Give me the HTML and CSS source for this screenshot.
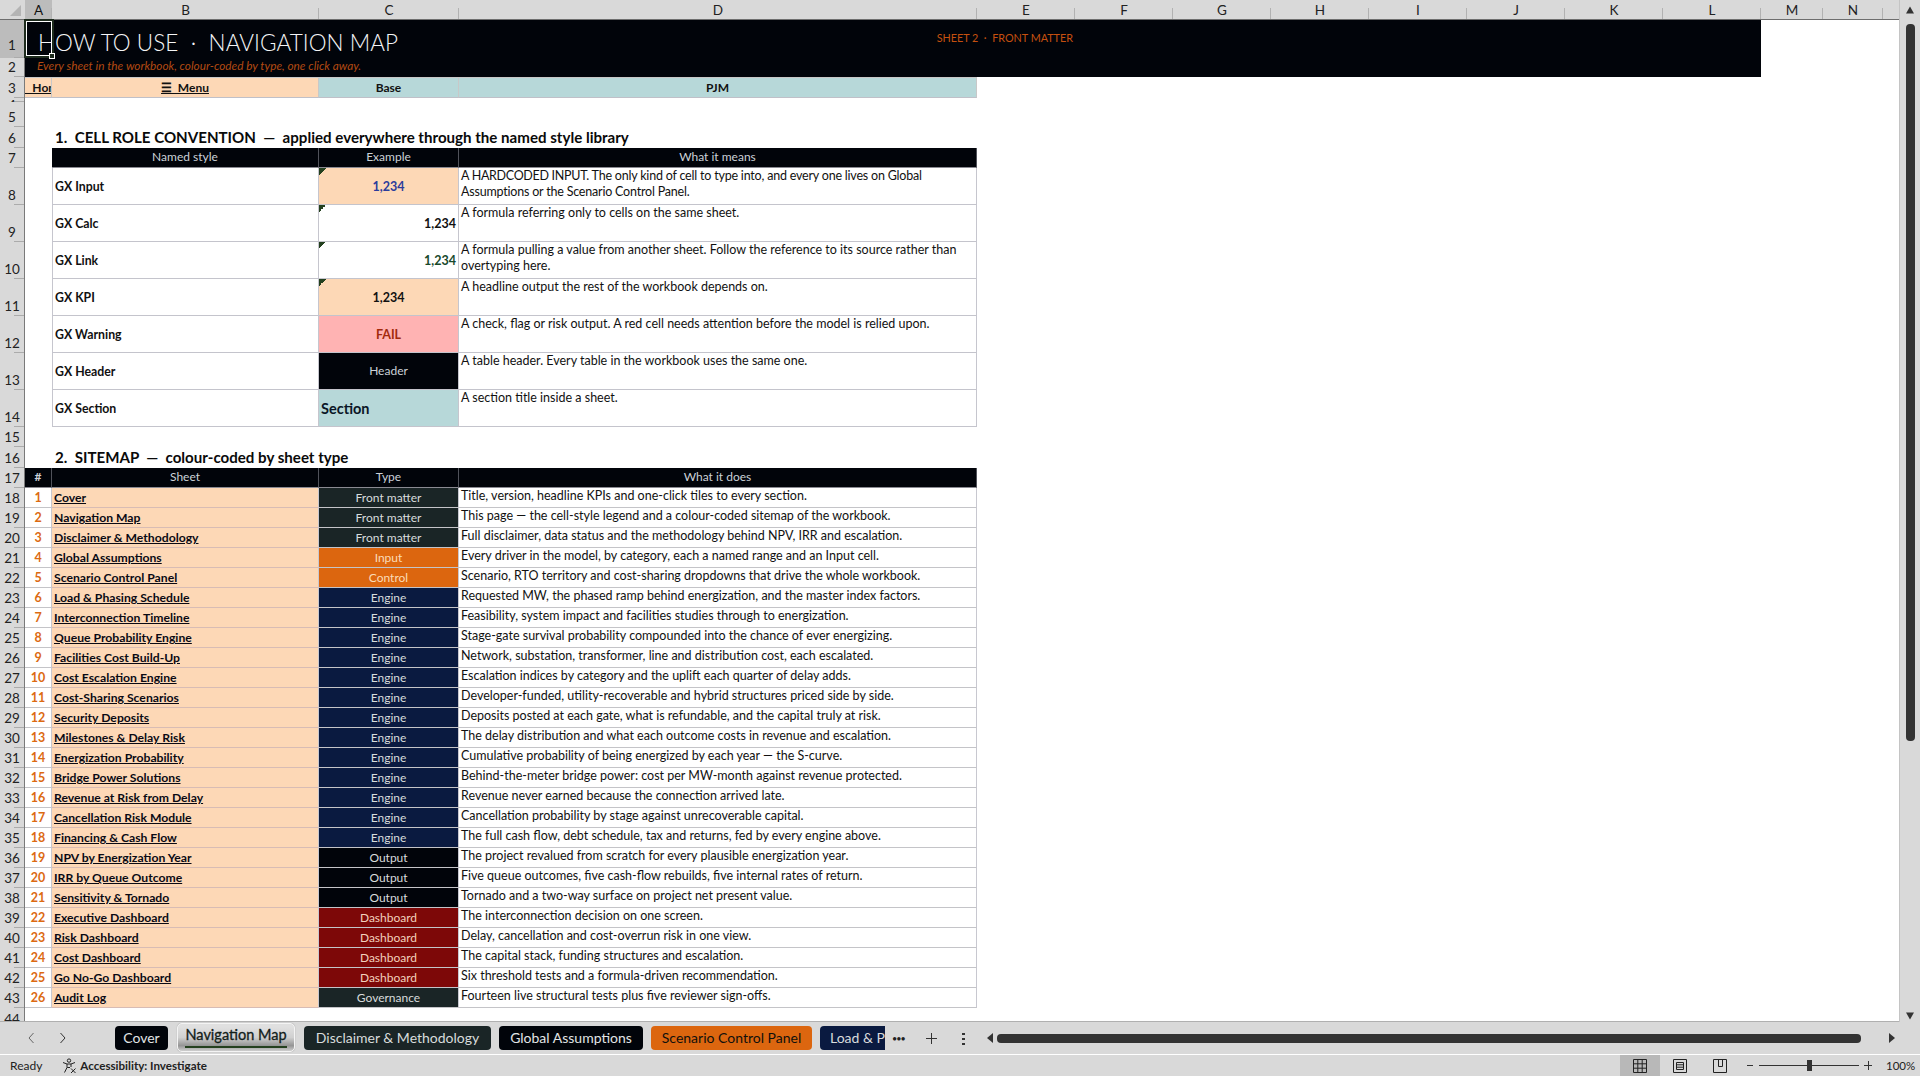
FILE: index.html
```html
<!DOCTYPE html>
<html lang="en">
<head>
  <meta charset="UTF-8" />
  <title>Navigation Map</title>
  <link rel="stylesheet" href="styles.css">
</head>
<body>
  <div id="main">
    <div id="sheet">
      <table id="cells">
        <colgroup>
          <col class="c-rh"><col class="c-a"><col class="c-b"><col class="c-c"><col class="c-d">
          <col class="c-x"><col class="c-x"><col class="c-x"><col class="c-x"><col class="c-x"><col class="c-x"><col class="c-x"><col class="c-x">
          <col class="c-m"><col class="c-n"><col class="c-end">
        </colgroup>
        <tr class="h-19 col-heads">
          <th class="corner"><svg viewBox="0 0 25 19" width="25" height="19"><path d="M21 5v11H10z" fill="#b4b4b4"/></svg></th>
          <th class="active">A</th><th>B</th><th>C</th><th>D</th><th>E</th><th>F</th><th>G</th><th>H</th><th>I</th><th>J</th><th>K</th><th>L</th><th>M</th><th>N</th><th class="blank"></th>
        </tr>
        <tr class="h-38">
          <th class="rh active first-row">1</th>
          <td colspan="4" class="band title">HOW TO USE &nbsp;·&nbsp; NAVIGATION MAP</td>
          <td class="band tag"><span>SHEET 2 &nbsp;·&nbsp; FRONT MATTER</span></td>
          <td colspan="7" class="band"></td>
        </tr>
        <tr class="h-19">
          <th class="rh">2</th>
          <td colspan="12" class="band subtitle">Every sheet in the workbook, colour-coded by type, one click away.</td>
        </tr>
        <tr class="h-21 nav-row">
          <th class="rh">3</th>
          <td class="nav peach home">&nbsp;&nbsp;&thinsp;Home</td>
          <td class="nav peach"><u>☰&nbsp; Menu</u></td>
          <td class="nav teal">Base</td>
          <td class="nav teal">PJM</td>
        </tr>
        <tr class="h-4"><th class="rh"><div class="clip">4</div></th></tr>
        <tr class="h-25"><th class="rh">5</th></tr>
        <tr class="h-21">
          <th class="rh">6</th><td></td>
          <td class="section-head">1.&nbsp; CELL ROLE CONVENTION &nbsp;—&nbsp; applied everywhere through the named style library</td>
        </tr>
        <tr class="h-20 head-row">
          <th class="rh">7</th><td></td><td>Named style</td><td>Example</td><td>What it means</td>
        </tr>
        <tr class="h-37 style-row">
          <th class="rh">8</th><td></td><td class="name">GX Input</td>
          <td class="ex flag peach ex-input">1,234</td>
          <td class="desc tight"><span class="caps">A HARDCODED INPUT.</span> The only kind of cell to type into, and every one lives on Global Assumptions or the Scenario Control Panel.</td>
        </tr>
        <tr class="h-37 style-row">
          <th class="rh">9</th><td></td><td class="name">GX Calc</td>
          <td class="ex flag ex-calc">1,234</td>
          <td class="desc">A formula referring only to cells on the same sheet.</td>
        </tr>
        <tr class="h-37 style-row">
          <th class="rh">10</th><td></td><td class="name">GX Link</td>
          <td class="ex flag ex-link">1,234</td>
          <td class="desc">A formula pulling a value from another sheet. Follow the reference to its source rather than overtyping here.</td>
        </tr>
        <tr class="h-37 style-row">
          <th class="rh">11</th><td></td><td class="name">GX KPI</td>
          <td class="ex flag peach ex-kpi">1,234</td>
          <td class="desc">A headline output the rest of the workbook depends on.</td>
        </tr>
        <tr class="h-37 style-row">
          <th class="rh">12</th><td></td><td class="name">GX Warning</td>
          <td class="ex ex-warn">FAIL</td>
          <td class="desc">A check, flag or risk output. A red cell needs attention before the model is relied upon.</td>
        </tr>
        <tr class="h-37 style-row">
          <th class="rh">13</th><td></td><td class="name">GX Header</td>
          <td class="ex ex-head">Header</td>
          <td class="desc">A table header. Every table in the workbook uses the same one.</td>
        </tr>
        <tr class="h-37 style-row">
          <th class="rh">14</th><td></td><td class="name">GX Section</td>
          <td class="ex teal ex-section">Section</td>
          <td class="desc">A section title inside a sheet.</td>
        </tr>
        <tr class="h-20"><th class="rh">15</th></tr>
        <tr class="h-21">
          <th class="rh">16</th><td></td>
          <td class="section-head">2.&nbsp; SITEMAP &nbsp;—&nbsp; colour-coded by sheet type</td>
        </tr>
        <tr class="h-20 head-row">
          <th class="rh">17</th><td class="hash">#</td><td>Sheet</td><td>Type</td><td>What it does</td>
        </tr>
        <tr class="h-20 map"><th class="rh">18</th><td class="num">1</td><td class="link"><u>Cover</u></td><td class="kind front">Front matter</td><td class="what">Title, version, headline KPIs and one-click tiles to every section.</td></tr>
        <tr class="h-20 map"><th class="rh">19</th><td class="num">2</td><td class="link"><u>Navigation Map</u></td><td class="kind front">Front matter</td><td class="what">This page — the cell-style legend and a colour-coded sitemap of the workbook.</td></tr>
        <tr class="h-20 map"><th class="rh">20</th><td class="num">3</td><td class="link"><u>Disclaimer &amp; Methodology</u></td><td class="kind front">Front matter</td><td class="what">Full disclaimer, data status and the methodology behind NPV, IRR and escalation.</td></tr>
        <tr class="h-20 map"><th class="rh">21</th><td class="num">4</td><td class="link"><u>Global Assumptions</u></td><td class="kind input">Input</td><td class="what">Every driver in the model, by category, each a named range and an Input cell.</td></tr>
        <tr class="h-20 map"><th class="rh">22</th><td class="num">5</td><td class="link"><u>Scenario Control Panel</u></td><td class="kind input">Control</td><td class="what">Scenario, RTO territory and cost-sharing dropdowns that drive the whole workbook.</td></tr>
        <tr class="h-20 map"><th class="rh">23</th><td class="num">6</td><td class="link"><u>Load &amp; Phasing Schedule</u></td><td class="kind engine">Engine</td><td class="what">Requested MW, the phased ramp behind energization, and the master index factors.</td></tr>
        <tr class="h-20 map"><th class="rh">24</th><td class="num">7</td><td class="link"><u>Interconnection Timeline</u></td><td class="kind engine">Engine</td><td class="what">Feasibility, system impact and facilities studies through to energization.</td></tr>
        <tr class="h-20 map"><th class="rh">25</th><td class="num">8</td><td class="link"><u>Queue Probability Engine</u></td><td class="kind engine">Engine</td><td class="what">Stage-gate survival probability compounded into the chance of ever energizing.</td></tr>
        <tr class="h-20 map"><th class="rh">26</th><td class="num">9</td><td class="link"><u>Facilities Cost Build-Up</u></td><td class="kind engine">Engine</td><td class="what">Network, substation, transformer, line and distribution cost, each escalated.</td></tr>
        <tr class="h-20 map"><th class="rh">27</th><td class="num">10</td><td class="link"><u>Cost Escalation Engine</u></td><td class="kind engine">Engine</td><td class="what">Escalation indices by category and the uplift each quarter of delay adds.</td></tr>
        <tr class="h-20 map"><th class="rh">28</th><td class="num">11</td><td class="link"><u>Cost-Sharing Scenarios</u></td><td class="kind engine">Engine</td><td class="what">Developer-funded, utility-recoverable and hybrid structures priced side by side.</td></tr>
        <tr class="h-20 map"><th class="rh">29</th><td class="num">12</td><td class="link"><u>Security Deposits</u></td><td class="kind engine">Engine</td><td class="what">Deposits posted at each gate, what is refundable, and the capital truly at risk.</td></tr>
        <tr class="h-20 map"><th class="rh">30</th><td class="num">13</td><td class="link"><u>Milestones &amp; Delay Risk</u></td><td class="kind engine">Engine</td><td class="what">The delay distribution and what each outcome costs in revenue and escalation.</td></tr>
        <tr class="h-20 map"><th class="rh">31</th><td class="num">14</td><td class="link"><u>Energization Probability</u></td><td class="kind engine">Engine</td><td class="what">Cumulative probability of being energized by each year — the S-curve.</td></tr>
        <tr class="h-20 map"><th class="rh">32</th><td class="num">15</td><td class="link"><u>Bridge Power Solutions</u></td><td class="kind engine">Engine</td><td class="what">Behind-the-meter bridge power: cost per MW-month against revenue protected.</td></tr>
        <tr class="h-20 map"><th class="rh">33</th><td class="num">16</td><td class="link"><u>Revenue at Risk from Delay</u></td><td class="kind engine">Engine</td><td class="what">Revenue never earned because the connection arrived late.</td></tr>
        <tr class="h-20 map"><th class="rh">34</th><td class="num">17</td><td class="link"><u>Cancellation Risk Module</u></td><td class="kind engine">Engine</td><td class="what">Cancellation probability by stage against unrecoverable capital.</td></tr>
        <tr class="h-20 map"><th class="rh">35</th><td class="num">18</td><td class="link"><u>Financing &amp; Cash Flow</u></td><td class="kind engine">Engine</td><td class="what">The full cash flow, debt schedule, tax and returns, fed by every engine above.</td></tr>
        <tr class="h-20 map"><th class="rh">36</th><td class="num">19</td><td class="link"><u>NPV by Energization Year</u></td><td class="kind output">Output</td><td class="what">The project revalued from scratch for every plausible energization year.</td></tr>
        <tr class="h-20 map"><th class="rh">37</th><td class="num">20</td><td class="link"><u>IRR by Queue Outcome</u></td><td class="kind output">Output</td><td class="what">Five queue outcomes, five cash-flow rebuilds, five internal rates of return.</td></tr>
        <tr class="h-20 map"><th class="rh">38</th><td class="num">21</td><td class="link"><u>Sensitivity &amp; Tornado</u></td><td class="kind output">Output</td><td class="what">Tornado and a two-way surface on project net present value.</td></tr>
        <tr class="h-20 map"><th class="rh">39</th><td class="num">22</td><td class="link"><u>Executive Dashboard</u></td><td class="kind dash">Dashboard</td><td class="what">The interconnection decision on one screen.</td></tr>
        <tr class="h-20 map"><th class="rh">40</th><td class="num">23</td><td class="link"><u>Risk Dashboard</u></td><td class="kind dash">Dashboard</td><td class="what">Delay, cancellation and cost-overrun risk in one view.</td></tr>
        <tr class="h-20 map"><th class="rh">41</th><td class="num">24</td><td class="link"><u>Cost Dashboard</u></td><td class="kind dash">Dashboard</td><td class="what">The capital stack, funding structures and escalation.</td></tr>
        <tr class="h-20 map"><th class="rh">42</th><td class="num">25</td><td class="link"><u>Go No-Go Dashboard</u></td><td class="kind dash">Dashboard</td><td class="what">Six threshold tests and a formula-driven recommendation.</td></tr>
        <tr class="h-20 map"><th class="rh">43</th><td class="num">26</td><td class="link"><u>Audit Log</u></td><td class="kind front">Governance</td><td class="what">Fourteen live structural tests plus five reviewer sign-offs.</td></tr>
        <tr class="h-15"><th class="rh"><div class="clip-44">44</div></th></tr>
      </table>
      <div id="cursor"><i></i></div>
    </div>
    <div id="vscroll">
      <svg class="arrow" viewBox="0 0 10 10" width="10" height="10"><path d="M5 1.5l4 7H1z" fill="#333"/></svg>
      <div class="thumb"></div>
      <svg class="arrow bottom" viewBox="0 0 10 10" width="10" height="10"><path d="M5 8.5l4-7H1z" fill="#333"/></svg>
    </div>
  </div>

  <div id="tabbar">
    <svg class="chev first" viewBox="0 0 10 14" width="10" height="14"><path d="M7.5 2L3 7l4.5 5" fill="none" stroke="#666" stroke-width="1"/></svg>
    <svg class="chev" viewBox="0 0 10 14" width="10" height="14"><path d="M2.5 2L7 7l-4.5 5" fill="none" stroke="#333" stroke-width="1"/></svg>
    <div class="tabs">
      <div class="tab t-black t-cover">Cover</div>
      <div class="tab t-active">Navigation Map</div>
      <div class="tab t-front t-disc">Disclaimer &amp; Methodology</div>
      <div class="tab t-black t-glob">Global Assumptions</div>
      <div class="tab t-orange t-scen">Scenario Control Panel</div>
      <div class="tab t-navy t-load">Load &amp; Phasing Schedule</div>
    </div>
    <div class="more">•••</div>
    <svg class="plus" viewBox="0 0 13 13" width="13" height="13"><path d="M6.5 1v11M1 6.5h11" stroke="#333" stroke-width="1"/></svg>
    <svg class="dots" viewBox="0 0 3 13" width="3" height="13"><path d="M0 1h3v2H0zM0 6h3v2H0zM0 11h3v2H0z" fill="#333"/></svg>
    <div class="hscroll">
      <svg viewBox="0 0 8 12" width="8" height="12"><path d="M1 6l6-5v10z" fill="#333"/></svg>
      <div class="hthumb"></div>
      <svg viewBox="0 0 8 12" width="8" height="12"><path d="M7 6L1 1v10z" fill="#333"/></svg>
    </div>
  </div>

  <div id="status">
    <span class="ready">Ready</span>
    <svg class="acc-icon" viewBox="0 0 15 16" width="15" height="16" fill="none" stroke="#222" stroke-width="1">
      <circle cx="7" cy="2.6" r="1.7"/>
      <path d="M1 4.5l4 1.5h4l4-1.5M5 6v3.5L2.5 14.5M9 6v3M5.2 9.5H8M9 10.5l4.5 4.5M13.5 10.5L9 15"/>
    </svg>
    <span class="acc">Accessibility: Investigate</span>
    <div class="views">
      <div class="view on"><svg viewBox="0 0 14 14" width="14" height="14" fill="none" stroke="#222"><path d="M.5.5h13v13H.5zM.5 4.8h13M.5 9.2h13M4.8.5v13M9.2.5v13"/></svg></div>
      <div class="view"><svg viewBox="0 0 14 14" width="14" height="14" fill="none" stroke="#222"><path d="M.5.5h13v13H.5zM3.5 3.5h7v7h-7zM3.5 5.8h7M3.5 8.2h7"/></svg></div>
      <div class="view"><svg viewBox="0 0 14 14" width="14" height="14" fill="none" stroke="#222"><path d="M.5.5h13v13H.5zM5.5.5v7h4v-7"/></svg></div>
    </div>
    <div class="zoom">
      <span class="zbtn zminus"></span>
      <div class="slider"><i></i></div>
      <span class="zbtn zplus"></span>
      <span class="pct">100%</span>
    </div>
  </div>
</body>
</html>
```
FILE: styles.css
```css
* { box-sizing: border-box; }
html, body { height: 100%; }
body {
  margin: 0;
  overflow: hidden;
  display: flex;
  flex-direction: column;
  background: #d9d9d9;
  font-family: Lato, "Open Sans", sans-serif;
  color: #111;
}

#main {
  height: 1022px;
  display: flex;
}
#sheet {
  position: relative;
  width: 1899px;
  height: 1022px;
  overflow: hidden;
  background: #fff;
  border-bottom: 1px solid #b0b0b0;
}
#vscroll {
  flex: 1;
  display: flex;
  flex-direction: column;
  align-items: center;
  border-left: 1px solid #c4c4c4;
  padding-top: 5px;
}
#vscroll .thumb {
  width: 9px;
  height: 717px;
  margin-top: 9px;
  border-radius: 4px;
  background: #333;
}
#vscroll .bottom { margin-top: auto; margin-bottom: 1px; }

/* grid */
#cells {
  border-collapse: separate;
  border-spacing: 0;
  table-layout: fixed;
  width: 1899px;
  font-size: 12.5px;
}
.c-rh { width: 25px; }
.c-a { width: 27px; }
.c-b { width: 267px; }
.c-c { width: 140px; }
.c-d { width: 518px; }
.c-x { width: 98px; }
.c-m { width: 62px; }
.c-n { width: 60px; }
.c-end { width: 16px; }

th, td { padding: 0; white-space: nowrap; }
.h-4 > * { height: 4px; }
.h-15 > * { height: 15px; }
.h-19 > * { height: 19px; }
.h-20 > * { height: 20px; }
.h-21 > * { height: 21px; }
.h-25 > * { height: 25px; }
.h-37 > * { height: 37px; }
.h-38 > * { height: 38px; }

/* headers */
.col-heads th {
  background-color: #d9d9d9;
  background-image: linear-gradient(#b2b2b2, #b2b2b2);
  background-size: 1px 11px;
  background-position: right bottom;
  background-repeat: no-repeat;
  border-bottom: 1px solid #6e6e6e;
  font-size: 13.5px;
  font-weight: 400;
  color: #222;
}
.col-heads th.corner { background-image: none; }
.col-heads th.corner svg { display: block; }
.col-heads th.active { background-color: #bcbcbc; color: #111; }
.col-heads th.blank { background-image: none; }
.rh {
  padding-bottom: 2px;
  background-color: #d9d9d9;
  background-image: linear-gradient(#ababab, #ababab);
  background-size: 10px 1px;
  background-position: right bottom;
  background-repeat: no-repeat;
  border-right: 1px solid #7a7a7a;
  vertical-align: bottom;
  font-size: 13.5px;
  font-weight: 400;
  line-height: 15px;
  color: #222;
}
.rh.active { background-color: #bcbcbc; }
.rh.first-row { padding-bottom: 5px; }
.h-4 .rh { padding-bottom: 0; }
.clip { height: 4px; line-height: 15px; overflow: hidden; }
.clip-44 { height: 15px; padding-top: 4px; overflow: hidden; }
.h-15 .rh { padding-bottom: 0; background-image: none; }

/* title band */
.band { background: #01040a; }
.title {
  padding: 6px 0 0 13px;
  font-size: 22.5px;
  font-weight: 300;
  color: #f4f5f7;
  letter-spacing: .05px;
  overflow: visible;
}
.tag { font-size: 10.8px; text-align: right; vertical-align: top; overflow: visible; }
.tag span {
  display: flex;
  justify-content: flex-end;
  padding: 11px 2px 0 0;
  color: #c5500f;
}
.subtitle {
  padding: 0 0 4px 12px;
  font-size: 11.8px;
  font-style: italic;
  line-height: 14px;
  color: #b34a12;
}

.peach { background-color: #fdd8b6; }
.teal { background-color: #b7d8d9; }
.nav {
  padding-bottom: 1px;
  border-bottom: 1px solid #c0c0c8;
  border-right: 1px solid #c8c8c8;
  border-top: 1px solid #c8c8c8;
  text-align: center;
  font-weight: 700;
  font-size: 12px;
  color: #111;
}
.home { text-align: left; overflow: hidden; text-decoration: underline; }

.section-head {
  padding: 0 0 2px 3px;
  vertical-align: bottom;
  font-size: 15.1px;
  font-weight: 700;
  line-height: 18px;
  color: #0a0a0a;
  overflow: visible;
}

.head-row td {
  padding-bottom: 2px;
  background: #01040a;
  border-right: 1px solid #50525a;
  border-bottom: 1px solid #8a8a92;
  text-align: center;
  font-size: 12px;
  color: #ccd2d8;
}
.head-row td:first-of-type:not(.hash) {
  background: none;
  border: 0;
}
.hash { font-weight: 700; font-size: 11px; }

/* style legend */
.style-row td:not(:first-of-type) {
  border-right: 1px solid #c6c6ce;
  border-bottom: 1px solid #c4c4cc;
}
.name {
  padding-left: 2px;
  border-left: 1px solid #c6c6ce;
  font-weight: 700;
  font-size: 12.3px;
}
.ex { text-align: center; font-weight: 700; font-size: 12.5px; }
.flag {
  background-image: linear-gradient(135deg, #24401f 50%, transparent 50%);
  background-size: 7px 7px;
  background-repeat: no-repeat;
}
.ex-input { color: #2b3c9c; }
.ex-calc { text-align: right; padding-right: 2px; color: #111; }
.ex-link { text-align: right; padding-right: 2px; color: #17492c; }
.ex-kpi { color: #111; }
.ex-warn { background: #ffb3b3; color: #a32a0c; }
.ex-head { padding-bottom: 2px; background: #01040a; color: #ccd2d8; font-weight: 400; font-size: 12px; }
.ex-section { text-align: left; padding-left: 2px; font-size: 14.5px; color: #0a1626; }
.desc, .what {
  padding: 0 2px 0 2px;
  font-size: 12.5px;
  line-height: 16px;
  color: #111;
  vertical-align: top;
  white-space: normal;
}
.tight { letter-spacing: -.2px; }
.caps { letter-spacing: -.3px; }
.what { white-space: nowrap; }

/* sitemap */
.map td {
  border-right: 1px solid #c8c8d0;
  border-bottom: 1px solid #c4c4c8;
}
.num { text-align: center; font-weight: 700; font-size: 12.5px; color: #dc6a12; }
.link {
  padding-left: 2px;
  font-weight: 700;
  font-size: 12.2px;
  color: #0a0a14;
  background: #fdd8b6;
  border-bottom-color: #d8bcb4 !important;
}
.kind { text-align: center; font-size: 12px; color: #d8dcdc; }
.kind.front { background: #1a2526; }
.kind.input { background: #dc660f; color: #fbdcb8; }
.kind.engine { background: #0a1a40; }
.kind.output { background: #01040a; }
.kind.dash { background: #7d0808; color: #f3d0bc; }

/* active cell */
#cursor {
  position: absolute;
  left: 24px;
  top: 19px;
  width: 30px;
  height: 39px;
  border: 2px solid #1d2b1d;
  outline: 1px solid #fff;
  outline-offset: -3px;
}
#cursor i {
  position: absolute;
  right: -3px;
  bottom: -3px;
  width: 6px;
  height: 6px;
  background: #1d2b1d;
  border: 1px solid #fff;
}

/* tabs */
#tabbar {
  height: 33px;
  display: flex;
  align-items: center;
  border-bottom: 1px solid #fff;
  flex-shrink: 0;
}
.chev { margin-left: 22px; flex-shrink: 0; }
.chev.first { margin-left: 26px; }
.tabs {
  display: flex;
  align-items: center;
  height: 32px;
  width: 770px;
  margin-left: 47px;
  overflow: hidden;
  flex-shrink: 0;
}
.tab {
  flex-shrink: 0;
  height: 24px;
  margin-right: 8px;
  padding: 0 6px;
  border-radius: 4px;
  font-size: 14px;
  line-height: 24px;
  text-align: center;
  white-space: nowrap;
}
.t-black { background: #01040a; color: #e2e5e6; }
.t-front { background: #1a2526; color: #d8dcdc; }
.t-orange { background: #dc660f; color: #10100c; }
.t-navy { background: #0a1a40; color: #d8dcdc; }
.t-cover { width: 53px; margin-right: 9px; }
.t-active {
  position: relative;
  width: 118px;
  height: 29px;
  margin-right: 9px;
  margin-top: -2px;
  border: 1px solid #f4f4f4;
  border-radius: 5px;
  background: linear-gradient(#e0e0e0 10%, #d0d0d0 50%, #959595 80%, #cfcfcf);
  box-shadow: 0 0 1px #888;
  color: #12201a;
  font-size: 14.5px;
  font-weight: 400;
  line-height: 22px;
  -webkit-text-stroke: .3px #12201a;
}
.t-active::after {
  content: "";
  position: absolute;
  left: 7px;
  right: 7px;
  bottom: 3px;
  height: 2px;
  background: #24401f;
}
.t-disc { width: 187px; }
.t-glob { width: 144px; }
.t-scen { width: 161px; }
.t-load { width: 120px; padding-left: 10px; text-align: left; margin-right: 0; }
.more { margin-left: 7px; font-size: 9px; letter-spacing: -1px; color: #222; width: 16px; }
.plus { margin-left: 17px; flex-shrink: 0; }
.dots { margin-left: 24px; flex-shrink: 0; }
.hscroll {
  display: flex;
  align-items: center;
  flex: 1;
  margin-left: 21px;
  margin-right: 24px;
  gap: 3px;
}
.hthumb { flex: 1; height: 9px; border-radius: 4px; background: #333; margin-right: 24px; }
.hscroll svg { flex-shrink: 0; }

/* status bar */
#status {
  flex: 1;
  display: flex;
  align-items: center;
  font-size: 12px;
  color: #222;
}
.ready { margin-left: 10px; }
.acc-icon { margin-left: 20px; flex-shrink: 0; }
.acc { margin-left: 3px; font-weight: 700; font-size: 11.6px; }
.views { display: flex; align-self: stretch; margin-left: auto; }
.view {
  width: 40px;
  display: flex;
  align-items: center;
  justify-content: center;
}
.view.on { background: #b8b8b8; }
.zoom {
  display: flex;
  align-items: center;
  margin-left: 7px;
  margin-right: 8px;
}
.zbtn { height: 9px; background: linear-gradient(#333, #333) center / 100% 1px no-repeat; }
.zminus { width: 6px; }
.zplus {
  width: 8px;
  margin-left: 5px;
  background:
    linear-gradient(#333, #333) center / 100% 1px no-repeat,
    linear-gradient(#333, #333) center / 1px 100% no-repeat;
}
.slider {
  position: relative;
  width: 100px;
  height: 1px;
  margin-left: 6px;
  background: #333;
}
.slider i {
  position: absolute;
  left: 48px;
  top: -5px;
  width: 5px;
  height: 11px;
  background: #333;
}
.pct { width: 26px; margin-left: 14px; font-size: 11.5px; white-space: nowrap; }
```
